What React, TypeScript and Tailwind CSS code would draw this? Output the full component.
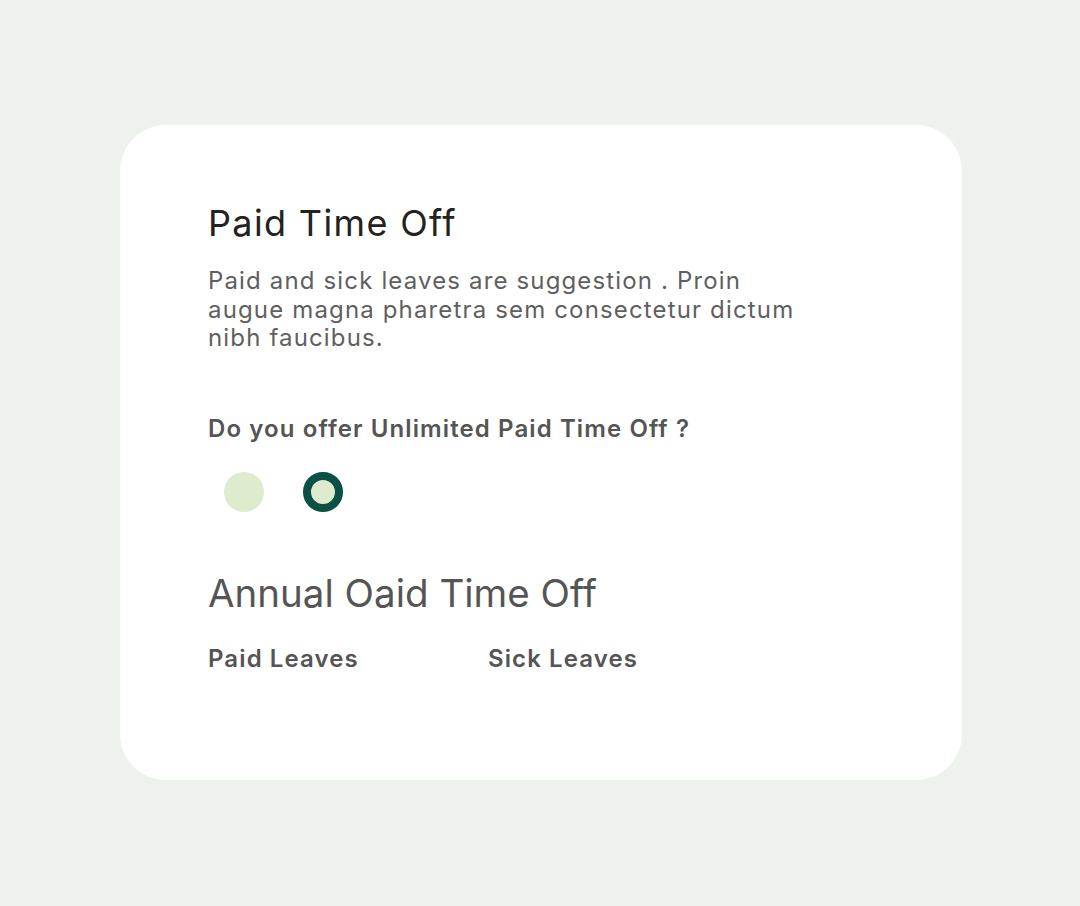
export default function App() {
  return (
    <div
      className="min-h-[906px] w-full bg-[#eef2ec] flex items-start pl-[120px] pt-[125px]"
      style={{ fontFamily: 'Inter, "Noto Sans", sans-serif' }}
    >
      <div className="w-[842px] h-[655px] bg-white rounded-[46px] px-[88px] pt-[76px]">
        <h1 className="text-[36px] leading-[44px] tracking-[1.35px] text-[#222222] font-normal">Paid Time Off</h1>
        <p className="mt-[22px] text-[24px] leading-[28.5px] tracking-[1.15px] text-[#5f5f5f] whitespace-nowrap">
          Paid and sick leaves are suggestion . Proin
          <br />
          augue magna pharetra sem consectetur dictum
          <br />
          nibh faucibus.
        </p>
        <p className="mt-[61px] text-[24px] leading-[30px] tracking-[1.1px] font-semibold text-[#555555]">
          Do you offer Unlimited Paid Time Off ?
        </p>
        <div className="mt-[28px] flex items-center gap-[39px] pl-[16px]">
          <span className="w-[40px] h-[40px] rounded-full bg-[#deebcc]" />
          <span className="w-[40px] h-[40px] rounded-full bg-[#deebcc] border-[8px] border-[#0b5045]" />
        </div>
        <h2 className="mt-[59px] text-[38.5px] leading-[44px] text-[#555555] font-normal">Annual Oaid Time Off</h2>
        <div className="mt-[29px] flex text-[24px] leading-[30px] tracking-[1.1px] font-semibold text-[#555555]">
          <span className="w-[280px]">Paid Leaves</span>
          <span>Sick Leaves</span>
        </div>
      </div>
    </div>
  )
}
